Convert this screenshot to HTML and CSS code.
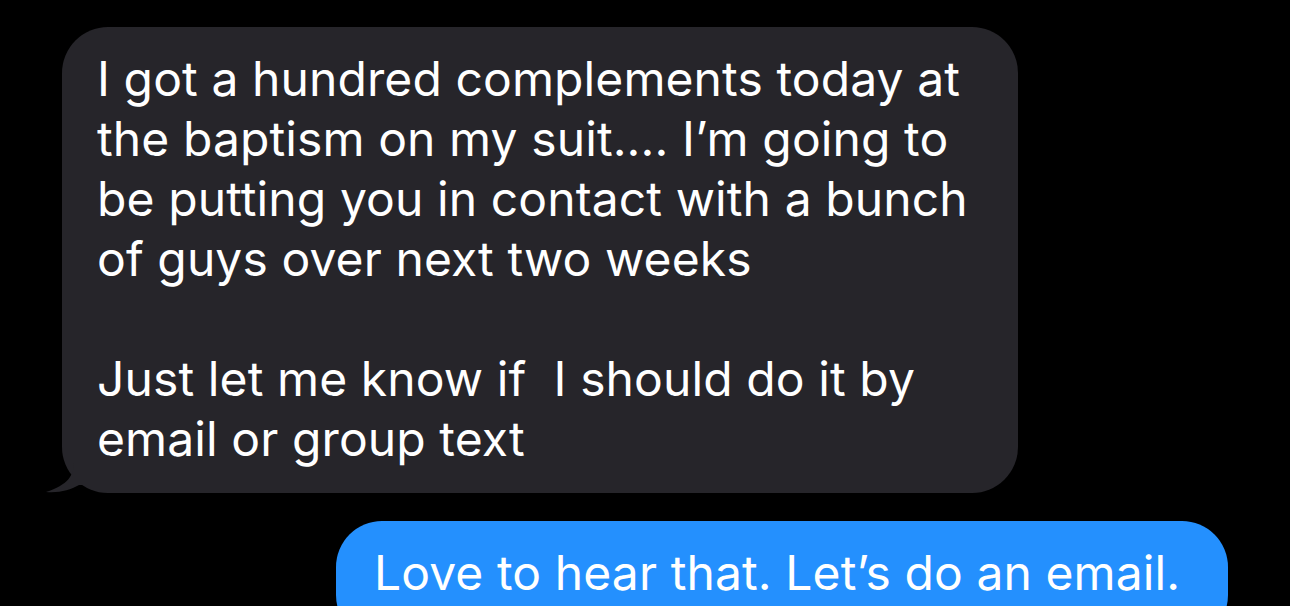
FILE: index.html
```html
<!DOCTYPE html>
<html lang="en">
<head>
  <meta charset="UTF-8" />
  <meta name="viewport" content="width=device-width, initial-scale=1" />
  <title>Messages</title>
  <link rel="stylesheet" href="styles.css">
</head>
<body>
  <div class="thread" role="log" aria-label="Conversation">
    <div class="bubble received">
      <p>I got a hundred complements today at<br>the baptism on my suit.... I’m going to<br>be putting you in contact with a bunch<br>of guys over next two weeks</p>
      <p>Just let me know if&nbsp; I should do it by<br>email or group text</p>
      <svg class="tail" viewBox="0 0 40 30" aria-hidden="true">
        <path d="M30 0 C30 12 24 22 2 29 C16 30 26 27 35 22 L40 22 L40 0 Z" />
      </svg>
    </div>
    <div class="bubble sent">
      <p>Love to hear that. Let’s do an email.</p>
    </div>
  </div>
</body>
</html>
```

FILE: styles.css
```css
body {
  margin: 0;
  background: #000;
  font-family: Inter, "Noto Sans", sans-serif;
  color: #fff;
}
.thread {
  display: flex;
  flex-direction: column;
  align-items: flex-start;
  padding-top: 27px;
  gap: 28px;
  height: 606px;
  box-sizing: border-box;
  overflow: hidden;
}
.bubble {
  position: relative;
  flex-shrink: 0;
  border-radius: 46px;
  padding: 22px 35px 24px;
  font-size: 48px;
  line-height: 60px;
  letter-spacing: 0.1px;
  box-sizing: border-box;
}
.bubble p {
  margin: 0;
}
.bubble p + p {
  margin-top: 60px;
}
.received {
  background: #26252a;
  margin-left: 62px;
  width: 956px;
}
.received .tail {
  position: absolute;
  left: -18px;
  bottom: 0;
  width: 40px;
  height: 30px;
  fill: #26252a;
}
.sent {
  background: #2490fe;
  margin-left: 336px;
  width: 892px;
  padding-left: 38px;
  height: 120px;
}
```
